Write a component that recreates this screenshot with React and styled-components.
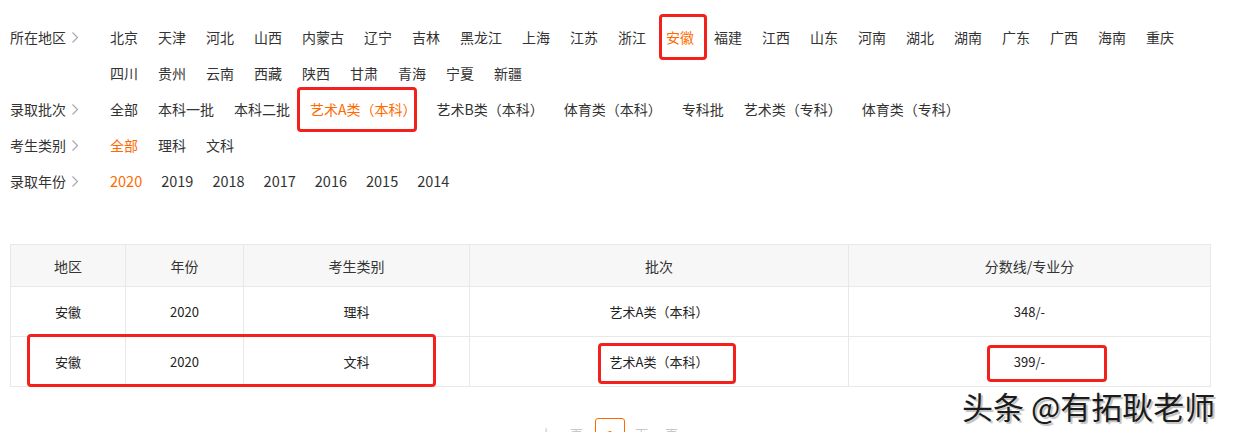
import React from 'react'
import styled, { createGlobalStyle } from 'styled-components'

const GlobalStyle = createGlobalStyle`
  html, body {
    margin: 0;
    padding: 0;
    background: #fff;
  }
  body {
    font-family: "Microsoft YaHei", "Noto Sans CJK SC", "Noto Sans", sans-serif;
    color: #333;
  }
`;

const Page = styled.div`
  position: relative;
  width: 1234px;
  height: 432px;
  overflow: hidden;
`;

const Filters = styled.div`
  padding: 19px 0 0 10px;
`;

const FilterRow = styled.div`
  display: flex;
  align-items: flex-start;
`;

const Label = styled.div`
  width: 100px;
  flex: none;
  height: 36px;
  display: flex;
  align-items: center;
  gap: 5px;
  font-size: 14px;
  color: #333;
`;

const Options = styled.div`
  display: flex;
  flex-wrap: wrap;
  width: 1100px;
`;

const Option = styled.span`
  height: 36px;
  line-height: 36px;
  margin-right: 20px;
  font-size: 14px;
  white-space: nowrap;
  cursor: pointer;
  color: ${({ $active }) => ($active ? '#ff6a00' : '#333')};
`;

const YearOption = styled(Option)`
  font-size: 14.5px;
  margin-right: 19px;
`;

const TableWrap = styled.div`
  margin: 45px 0 0 10px;
  width: 1200px;
`;

const Table = styled.table`
  width: 100%;
  border-collapse: collapse;
  table-layout: fixed;
`;

const Th = styled.th`
  height: 41px;
  padding: 0;
  background: #f7f7f7;
  border: 1px solid #e8e8e8;
  font-weight: normal;
  font-size: 14px;
  color: #333;
  text-align: center;
`;

const Td = styled.td`
  height: 49px;
  padding: 0;
  border: 1px solid #e8e8e8;
  font-size: 13px;
  color: #222;
  text-align: center;
`;

const Pager = styled.div`
  display: flex;
  justify-content: center;
  align-items: flex-start;
  gap: 6px;
  margin-top: 31px;
  width: 1200px;
  margin-left: 10px;
`;

const PageText = styled.span`
  font-size: 13px;
  line-height: 13px;
  margin-top: 9px;
  color: #c8c8c8;
  padding: 0 4px;
  letter-spacing: 2px;
`;

const PageBox = styled.span`
  width: 30px;
  height: 30px;
  border: 1px solid #ff6a00;
  border-radius: 3px;
  display: flex;
  align-items: flex-start;
  justify-content: center;
  padding-top: 7px;
  box-sizing: border-box;
  font-size: 13px;
  font-weight: bold;
  color: #ff6a00;
`;

const Mark = styled.div`
  position: absolute;
  border: 3px solid #f2211c;
  border-radius: 4px;
  box-sizing: border-box;
  pointer-events: none;
`;

const Watermark = styled.div`
  position: absolute;
  left: 962px;
  top: 383px;
  font-size: 31px;
  color: #1b1b1b;
  white-space: nowrap;
  text-shadow: 2px 2px 1px rgba(0, 0, 0, 0.25), -1px -1px 0 #fff;
`;

const Chevron = () => (
  <svg width="8" height="13" viewBox="0 0 8 13">
    <path d="M1.5 1.5 L6.5 6.5 L1.5 11.5" fill="none" stroke="#a8a8b0" strokeWidth="1.2" />
  </svg>
);

const regions = [
  '北京', '天津', '河北', '山西', '内蒙古', '辽宁', '吉林', '黑龙江', '上海', '江苏', '浙江',
  '安徽', '福建', '江西', '山东', '河南', '湖北', '湖南', '广东', '广西', '海南', '重庆',
  '四川', '贵州', '云南', '西藏', '陕西', '甘肃', '青海', '宁夏', '新疆',
];
const batches = [
  '全部', '本科一批', '本科二批', '艺术A类（本科）', '艺术B类（本科）', '体育类（本科）',
  '专科批', '艺术类（专科）', '体育类（专科）',
];
const kinds = ['全部', '理科', '文科'];
const years = ['2020', '2019', '2018', '2017', '2016', '2015', '2014'];

const rows = [
  ['安徽', '2020', '理科', '艺术A类（本科）', '348/-'],
  ['安徽', '2020', '文科', '艺术A类（本科）', '399/-'],
];

const cols = [115, 118, 226, 379, 362];

export default function App() {
  return (
    <Page>
      <GlobalStyle />
      <Filters>
        <FilterRow>
          <Label>所在地区<Chevron /></Label>
          <Options>
            {regions.map((r) => (
              <Option key={r} $active={r === '安徽'}>{r}</Option>
            ))}
          </Options>
        </FilterRow>
        <FilterRow>
          <Label>录取批次<Chevron /></Label>
          <Options>
            {batches.map((b) => (
              <Option key={b} $active={b === '艺术A类（本科）'}>{b}</Option>
            ))}
          </Options>
        </FilterRow>
        <FilterRow>
          <Label>考生类别<Chevron /></Label>
          <Options>
            {kinds.map((k) => (
              <Option key={k} $active={k === '全部'}>{k}</Option>
            ))}
          </Options>
        </FilterRow>
        <FilterRow>
          <Label>录取年份<Chevron /></Label>
          <Options>
            {years.map((y) => (
              <YearOption key={y} $active={y === '2020'}>{y}</YearOption>
            ))}
          </Options>
        </FilterRow>
      </Filters>

      <TableWrap>
        <Table>
          <colgroup>
            {cols.map((w, i) => <col key={i} style={{ width: w }} />)}
          </colgroup>
          <thead>
            <tr>
              <Th>地区</Th>
              <Th>年份</Th>
              <Th>考生类别</Th>
              <Th>批次</Th>
              <Th>分数线/专业分</Th>
            </tr>
          </thead>
          <tbody>
            {rows.map((r, i) => (
              <tr key={i}>
                {r.map((c, j) => <Td key={j}>{c}</Td>)}
              </tr>
            ))}
          </tbody>
        </Table>
      </TableWrap>

      <Pager>
        <PageText>上一页</PageText>
        <PageBox>1</PageBox>
        <PageText>下一页</PageText>
      </Pager>

      <Mark style={{ left: 659, top: 14, width: 48, height: 46 }} />
      <Mark style={{ left: 297, top: 87, width: 120, height: 45 }} />
      <Mark style={{ left: 27, top: 334, width: 409, height: 53 }} />
      <Mark style={{ left: 598, top: 343, width: 138, height: 41 }} />
      <Mark style={{ left: 987, top: 345, width: 120, height: 37 }} />

      <Watermark>头条 @有拓耿老师</Watermark>
    </Page>
  )
}
